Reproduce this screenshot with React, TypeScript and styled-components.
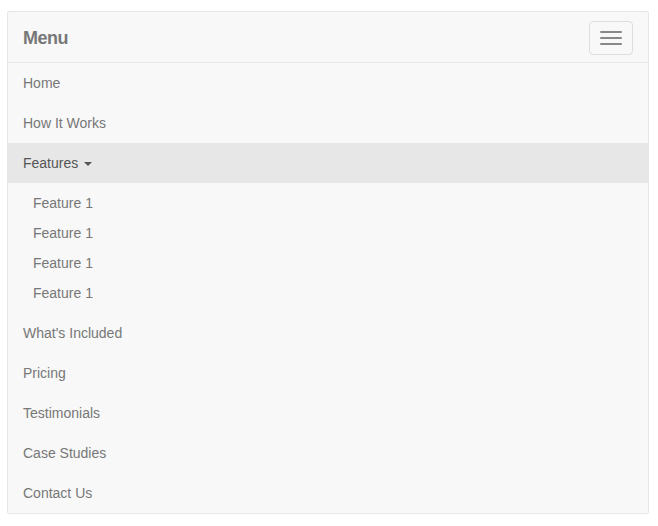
import React from "react";
import styled, { createGlobalStyle } from "styled-components";

const Global = createGlobalStyle`
  html, body { margin: 0; padding: 0; background: #fff; }
  body { font-family: "Liberation Sans", Arial, sans-serif; font-size: 14px; line-height: 20px; color: #333; }
  * { box-sizing: border-box; }
`;

const Page = styled.div`
  padding: 11px 9px 12px 7px;
`;

const Navbar = styled.nav`
  background: #f8f8f8;
  border: 1px solid #e7e7e7;
  border-radius: 2px;
`;

const Header = styled.div`
  height: 50px;
  display: flex;
  align-items: center;
  justify-content: space-between;
  padding: 0 15px;
`;

const Brand = styled.a`
  font-size: 18px;
  font-weight: bold;
  letter-spacing: -0.5px;
  line-height: 20px;
  color: #777;
  text-decoration: none;
  margin-top: 1px;
`;

const Toggle = styled.button`
  width: 44px;
  height: 34px;
  padding: 9px 10px;
  background: transparent;
  border: 1px solid #ddd;
  border-radius: 4px;
  display: flex;
  flex-direction: column;
  justify-content: center;
  gap: 4px;
  margin-top: 1px;
`;

const Bar = styled.span`
  display: block;
  width: 22px;
  height: 2px;
  border-radius: 1px;
  background: #888;
`;

const Collapse = styled.ul`
  list-style: none;
  margin: 0;
  padding: 0;
  border-top: 1px solid #e7e7e7;
`;

const NavLink = styled.a<{ $active?: boolean }>`
  display: block;
  padding: 10px 15px;
  line-height: 20px;
  color: ${(p) => (p.$active ? "#555" : "#777")};
  background: ${(p) => (p.$active ? "#e7e7e7" : "transparent")};
  text-decoration: none;
`;

const Caret = styled.span`
  display: inline-block;
  width: 0;
  height: 0;
  margin-left: 2px;
  vertical-align: middle;
  border-top: 4px solid #555;
  border-left: 4px solid transparent;
  border-right: 4px solid transparent;
`;

const Dropdown = styled.ul`
  list-style: none;
  margin: 0;
  padding: 5px 0;
`;

const DropLink = styled.a`
  display: block;
  padding: 5px 15px 5px 25px;
  line-height: 20px;
  color: #777;
  text-decoration: none;
`;

const before = ["Home", "How It Works"];
const after = ["What's Included", "Pricing", "Testimonials", "Case Studies", "Contact Us"];

export default function App() {
  return (
    <>
      <Global />
      <Page>
        <Navbar>
          <Header>
            <Brand href="#">Menu</Brand>
            <Toggle aria-label="Toggle navigation">
              <Bar />
              <Bar />
              <Bar />
            </Toggle>
          </Header>
          <Collapse>
            {before.map((t) => (
              <li key={t}>
                <NavLink href="#">{t}</NavLink>
              </li>
            ))}
            <li>
              <NavLink href="#" $active>
                Features <Caret />
              </NavLink>
              <Dropdown>
                {[1, 2, 3, 4].map((i) => (
                  <li key={i}>
                    <DropLink href="#">Feature 1</DropLink>
                  </li>
                ))}
              </Dropdown>
            </li>
            {after.map((t) => (
              <li key={t}>
                <NavLink href="#">{t}</NavLink>
              </li>
            ))}
          </Collapse>
        </Navbar>
      </Page>
    </>
  );
}
